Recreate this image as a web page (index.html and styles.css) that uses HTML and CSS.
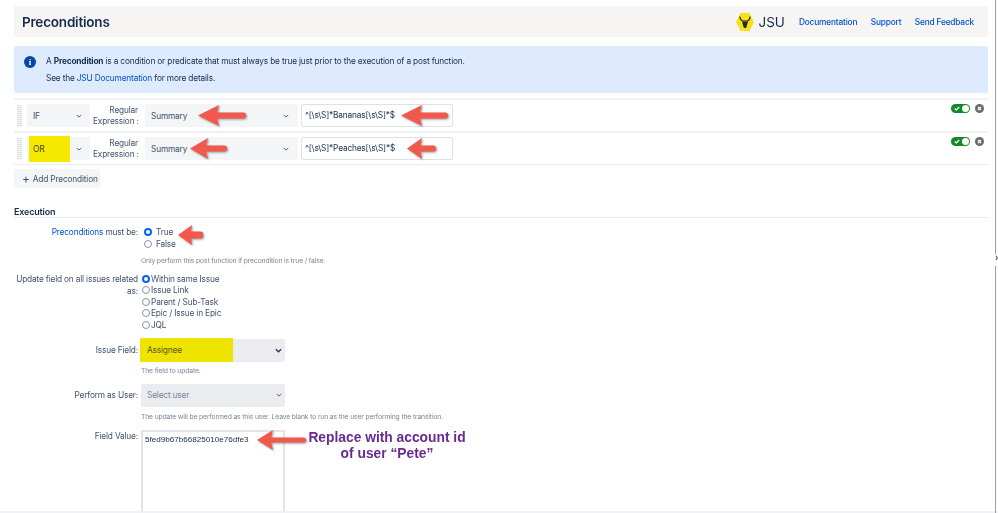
FILE: index.html
```html
<!DOCTYPE html>
<html lang="en">
<head>
<meta charset="utf-8">
<title>Preconditions</title>
<link rel="stylesheet" href="styles.css">
</head>
<body>
<div class="page">
  <header class="top">
    <h1 class="title">Preconditions</h1>
    <div class="brand">
      <svg class="logo" viewBox="0 0 18 20" aria-hidden="true">
        <path d="M4.500 1H13.500L18 10L13.500 19H4.500L0 10Z" fill="#f7e11c"/>
        <path d="M4 4.500C4 7 5 8.500 7 9H11C13 8.500 14 7 14 4.500" fill="none" stroke="#2b2a1c" stroke-width="1.200"/>
        <path d="M6 9.500H12L10.800 14L10 16H8L7.200 14Z" fill="#2b2a1c"/>
      </svg>
      <span class="brand-name">JSU</span>
    </div>
    <nav class="links">
      <a href="#">Documentation</a>
      <a href="#">Support</a>
      <a href="#">Send Feedback</a>
    </nav>
  </header>

  <section class="info">
    <span class="info-icon">i</span>
    <div class="info-text">
      <p>A <b>Precondition</b> is a condition or predicate that must always be true just prior to the execution of a post function.</p>
      <p>See the <a href="#">JSU Documentation</a> for more details.</p>
    </div>
  </section>

  <div class="rows">
    <div class="row">
      <span class="grip"></span>
      <div class="select op"><span>IF</span><svg class="chev" viewBox="0 0 8 5"><path d="M1 1l3 3 3-3"/></svg></div>
      <div class="regex-label">Regular<br>Expression :</div>
      <div class="select field"><span>Summary</span><svg class="chev" viewBox="0 0 8 5"><path d="M1 1l3 3 3-3"/></svg></div>
      <div class="input">^[\s\S]*Bananas[\s\S]*$</div>
      <div class="row-actions">
        <span class="toggle"><svg viewBox="0 0 8 6"><path d="M1 3l2 2 4-4"/></svg></span>
        <span class="remove"><svg viewBox="0 0 9 9"><path d="M3 3l3 3M6 3l-3 3"/></svg></span>
      </div>
    </div>
    <div class="row">
      <span class="grip"></span>
      <div class="select op"><span class="mark mark-or">OR</span><svg class="chev" viewBox="0 0 8 5"><path d="M1 1l3 3 3-3"/></svg></div>
      <div class="regex-label">Regular<br>Expression :</div>
      <div class="select field"><span>Summary</span><svg class="chev" viewBox="0 0 8 5"><path d="M1 1l3 3 3-3"/></svg></div>
      <div class="input">^[\s\S]*Peaches[\s\S]*$</div>
      <div class="row-actions">
        <span class="toggle"><svg viewBox="0 0 8 6"><path d="M1 3l2 2 4-4"/></svg></span>
        <span class="remove"><svg viewBox="0 0 9 9"><path d="M3 3l3 3M6 3l-3 3"/></svg></span>
      </div>
    </div>
  </div>

  <button class="add" type="button"><span class="plus">+</span><span>Add Precondition</span></button>

  <h2 class="section">Execution</h2>

  <div class="form-row must">
    <div class="label"><a href="#">Preconditions</a> must be:</div>
    <div class="control">
      <label class="opt wide"><input type="radio" name="must" checked> True</label>
      <label class="opt wide"><input type="radio" name="must"> False</label>
      <p class="hint">Only perform this post function if precondition is true / false.</p>
    </div>
  </div>

  <div class="form-row related">
    <div class="label">Update field on all issues related as:</div>
    <div class="control">
      <label class="opt"><input type="radio" name="rel" checked> Within same Issue</label>
      <label class="opt"><input type="radio" name="rel"> Issue Link</label>
      <label class="opt"><input type="radio" name="rel"> Parent / Sub-Task</label>
      <label class="opt"><input type="radio" name="rel"> Epic / Issue in Epic</label>
      <label class="opt"><input type="radio" name="rel"> JQL</label>
    </div>
  </div>

  <div class="form-row issue">
    <div class="label mid">Issue Field:</div>
    <div class="control">
      <div class="select wide-select"><span class="mark mark-issue">Assignee</span><svg class="chev dark" viewBox="0 0 8 5"><path d="M1 1l3 3 3-3"/></svg></div>
      <p class="hint">The field to update.</p>
    </div>
  </div>

  <div class="form-row perform">
    <div class="label mid">Perform as User:</div>
    <div class="control">
      <div class="select wide-select muted"><span>Select user</span><svg class="chev" viewBox="0 0 8 5"><path d="M1 1l3 3 3-3"/></svg></div>
      <p class="hint">The update will be performed as this user. Leave blank to run as the user performing the transition.</p>
    </div>
  </div>

  <div class="form-row value">
    <div class="label">Field Value:</div>
    <div class="control">
      <div class="textarea">5fed9b67b66825010e76dfe3</div>
    </div>
  </div>

  <!-- annotations drawn over the screenshot -->
  <svg class="arrow a1" viewBox="0 0 48 21"><path d="M0 10.500L21 0L19 7.500H45a3 3 0 0 1 0 6H19L21 21Z"/></svg>
  <svg class="arrow a2" viewBox="0 0 47 21"><path d="M0 10.500L21 0L19 7.500H44a3 3 0 0 1 0 6H19L21 21Z"/></svg>
  <svg class="arrow a3" viewBox="0 0 37 21"><path d="M0 10.500L18 0L16 7.500H34a3 3 0 0 1 0 6H16L18 21Z"/></svg>
  <svg class="arrow a4" viewBox="0 0 29 21"><path d="M0 10.500L15 0L13.500 7.500H26a3 3 0 0 1 0 6H13.500L15 21Z"/></svg>
  <svg class="arrow a5" viewBox="0 0 25 20"><path d="M0 10L14 0L13 6.500H22a3.500 3.500 0 0 1 0 7H13L14 20Z"/></svg>
  <svg class="arrow a6" viewBox="0 0 49 20"><path d="M0 10L16 0L14 7.500H46.500a2.500 2.500 0 0 1 0 5H14L16 20Z"/></svg>

  <p class="note">Replace with account id<br>of user “Pete”</p>

  <div class="bottom-line"></div>
  <div class="scroll-line upper"></div>
  <div class="scroll-line lower"></div>
  <span class="scroll-chev">›</span>
</div>
</body>
</html>
```

FILE: styles.css
```css
* { box-sizing: border-box; }
html, body { margin: 0; height: 100%; background: #fff; overflow: hidden; }
body { font-family: Inter, "Liberation Sans", sans-serif; font-size: 8.300px; letter-spacing: -0.170px; color: #42526e; }
a { color: #0052cc; text-decoration: none; }
p { margin: 0; }

.page {
  position: relative;
  width: 998px;
  height: 513px;
  overflow: hidden;
  padding: 6px 10px 0 14px;
  filter: blur(0.35px);
}

/* header */
.top {
  display: flex;
  align-items: center;
  height: 31px;
  padding: 0 14px 0 8px;
  background: #f6f5f3;
  border-radius: 2px;
}
.title { margin: 0; font-size: 13.500px; font-weight: 600; letter-spacing: -0.200px; color: #172b4d; }
.brand { display: flex; align-items: center; gap: 5px; margin-left: auto; }
.logo { width: 18px; height: 20px; }
.brand-name { font-size: 13.500px; letter-spacing: 0; color: #172b4d; }
.links { display: flex; gap: 13.500px; margin-left: 14px; }
.links a { font-weight: 500; white-space: nowrap; }

/* info */
.info {
  display: flex;
  gap: 10px;
  height: 47px;
  margin-top: 9px;
  padding: 10px;
  background: #deebff;
  border-radius: 2px;
  color: #172b4d;
}
.info-icon {
  width: 12px; height: 12px;
  border-radius: 50%;
  background: #0747a6;
  color: #fff;
  font: 700 9px/12px "Liberation Serif", serif;
  text-align: center;
}
.info-text p { line-height: 11px; margin-bottom: 6px; white-space: nowrap; }
.info-text b { font-weight: 700; }

/* precondition rows */
.rows {
  margin-top: 5px;
  border-top: 2px solid #f0f1f3;
  border-bottom: 1px solid #ebecf0;
}
.row {
  position: relative;
  display: flex;
  align-items: center;
  height: 31px;
  padding-left: 3px;
}
.row + .row { height: 33px; border-top: 2px solid #f0f1f3; }
.grip {
  width: 5px; height: 22px;
  margin-right: 5px;
  background: repeating-linear-gradient(#dfe1e6 0 1px, #f4f5f7 1px 2px);
}
.select {
  position: relative;
  display: flex;
  align-items: center;
  height: 23px;
  padding: 0 8px 0 6px;
  background: #f4f5f7;
  border-radius: 2px;
  color: #42526e;
}
.op { width: 63px; }
.regex-label { width: 45px; margin: 0 7px 0 3px; line-height: 11px; text-align: right; white-space: nowrap; }
.field { width: 153px; padding-right: 9px; }
.input {
  width: 152px; height: 23px;
  margin-left: 3px;
  padding-left: 3px;
  border: 1px solid #dfe1e6;
  border-radius: 2px;
  color: #172b4d;
  line-height: 21px;
}
.chev { width: 6px; height: 4px; margin-left: auto; fill: none; stroke: #505f79; stroke-width: 1.300; }
.chev.dark { width: 7px; height: 5px; stroke: #253858; stroke-width: 1.500; }
.row-actions {
  position: absolute;
  top: 4px; right: 4px;
  display: flex;
  gap: 5px;
}
.toggle {
  position: relative;
  display: block;
  width: 19px; height: 9px;
  background: #14892c;
  border-radius: 5px;
}
.toggle svg { position: absolute; left: 3px; top: 2px; width: 6px; height: 5px; fill: none; stroke: #fff; stroke-width: 1.500; }
.toggle::after {
  content: "";
  position: absolute;
  right: 1px; top: 1px;
  width: 7px; height: 7px;
  border-radius: 50%;
  background: #fff;
}
.remove {
  display: block;
  width: 9px; height: 9px;
  border-radius: 50%;
  background: #6b6b6b;
}
.remove svg { display: block; width: 9px; height: 9px; fill: none; stroke: #fff; stroke-width: 1.300; }

.add {
  display: flex;
  align-items: center;
  gap: 3px;
  width: 86px; height: 19px;
  margin-top: 4px;
  padding: 0 0 0 8px;
  border: 0;
  border-radius: 2px;
  background: #f4f5f7;
  color: #42526e;
  font: 8.300px Inter, sans-serif;
  letter-spacing: -0.170px;
}
.plus { font-size: 12px; line-height: 9px; }

/* execution */
.section {
  height: 12px;
  margin: 18px 0 0;
  border-bottom: 1px solid #ebecf0;
  color: #172b4d;
  font-size: 9px;
  font-weight: 600;
  line-height: 11px;
}
.form-row { display: flex; align-items: flex-start; }
.label { width: 127px; margin-left: -3px; text-align: right; line-height: 12px; flex: none; }
.control { margin-left: 3px; }
.opt { display: flex; align-items: center; height: 11.500px; margin-left: 1px; color: #42526e; white-space: nowrap; }
.opt input {
  appearance: none;
  width: 8px; height: 8px;
  margin: 0 1px 0 0;
  border: 1px solid #8993a4;
  border-radius: 50%;
  background: #fff;
}
.opt input:checked { border: 2.500px solid #0065ff; background: #fff; outline: 0; }
.opt.wide { gap: 3px; margin-left: 3px; height: 12px; }
.hint { color: #7a869a; font-size: 6.800px; letter-spacing: -0.150px; line-height: 9px; white-space: nowrap; }

.must { margin-top: 8px; }
.must .hint { margin-top: 6px; }
.related { margin-top: 8px; width: 300px; }
.issue { margin-top: 8px; }
.wide-select { width: 144px; padding: 0 3px 0 6px; background: #ebecf0; }
.issue .hint { margin-top: 4px; }
.perform { margin-top: 9px; }
.perform .hint { margin-top: 5px; }
.mid { line-height: 23px; }
.muted span { color: #7a869a; }
.value { margin-top: 9px; }
.textarea {
  width: 144px; height: 120px;
  padding: 2px;
  border: 2px solid #e2e4e9;
  color: #172b4d;
  font: 8.100px/11px "Liberation Sans", sans-serif;
  letter-spacing: 0;
}

/* annotations */
.mark {
  position: absolute;
  display: flex;
  align-items: center;
}
.mark-or { left: 2px; top: -1px; width: 41px; height: 26px; padding-left: 4px; background: #f5e900; color: #42461a; }
.mark-issue { left: -1px; top: -1px; width: 93px; height: 24px; padding-left: 7px; background: #efe300; color: #5a5a1a; }

.arrow {
  position: absolute;
  fill: #f2584c;
  filter: drop-shadow(1px 1.500px 1px rgba(60, 60, 60, .55));
}
.a1 { left: 198px; top: 105px; width: 48px; height: 21px; }
.a2 { left: 401px; top: 105px; width: 47px; height: 21px; }
.a3 { left: 190px; top: 138px; width: 37px; height: 21px; }
.a4 { left: 407px; top: 138px; width: 29px; height: 21px; }
.a5 { left: 178px; top: 225px; width: 25px; height: 20px; }
.a6 { left: 257px; top: 430px; width: 49px; height: 20px; }

.note {
  position: absolute;
  left: 296px; top: 430px;
  width: 182px;
  color: #6a2a90;
  font: 700 13.800px/16px "Liberation Sans", sans-serif;
  letter-spacing: 0;
  text-align: center;
}

.bottom-line { position: absolute; left: 0; right: 0; bottom: 0; height: 2px; background: #f0f1f3; }
.scroll-line { position: absolute; left: 995px; width: 1px; background: #9aa0a8; }
.scroll-line.upper { top: 0; height: 254px; }
.scroll-line.lower { top: 266px; bottom: 0; }
.scroll-chev { position: absolute; left: 995px; top: 252px; color: #555; font: 700 10px/12px "Liberation Sans", sans-serif; }
```
